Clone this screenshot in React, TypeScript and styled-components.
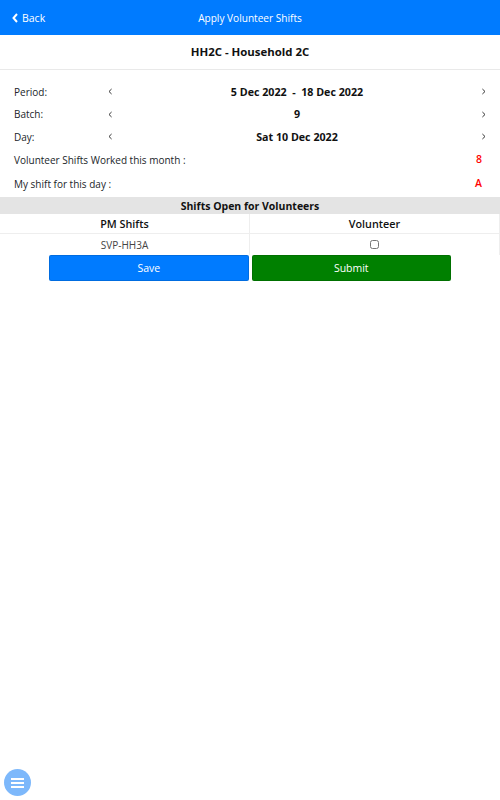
import React from 'react';
import styled, { createGlobalStyle } from 'styled-components';

const GlobalStyle = createGlobalStyle`
  html, body {
    margin: 0;
    padding: 0;
    background: #fff;
    font-family: "Open Sans", sans-serif;
    font-size: 10px;
    color: #212529;
  }
`;

const Page = styled.div`
  position: relative;
  width: 500px;
  height: 800px;
  overflow: hidden;
`;

const Header = styled.header`
  height: 35px;
  background: #007bff;
  color: #fff;
  position: relative;
  display: flex;
  align-items: center;
  justify-content: center;
`;

const BackLink = styled.a`
  position: absolute;
  left: 12px;
  top: 0;
  height: 35px;
  display: flex;
  align-items: center;
  gap: 4px;
  font-size: 10.5px;
`;

const HeaderTitle = styled.div`
  font-size: 10.1px;
`;

const SubHeader = styled.div`
  height: 33px;
  padding-bottom: 1px;
  border-bottom: 1px solid #e9e9e9;
  display: flex;
  align-items: center;
  justify-content: center;
  font-weight: 700;
  font-size: 11.4px;
  color: #111;
`;

const Filters = styled.div`
  padding: 10.5px 0 0.5px;
`;

const PickerRow = styled.div`
  height: 22.5px;
  display: grid;
  grid-template-columns: 94px 5px 1fr 5px;
  align-items: center;
  padding: 0 14px;
`;

const RowLabel = styled.span`
  font-size: 10px;
`;

const Chevron = styled.svg`
  width: 5px;
  height: 7px;
  fill: none;
  stroke: #333;
  stroke-width: 1;
`;

const PickerValue = styled.span`
  text-align: center;
  font-weight: 700;
  font-size: 10.7px;
  color: #111;
  white-space: pre;
`;

const InfoRow = styled.div`
  height: 24.25px;
  display: flex;
  align-items: center;
  justify-content: space-between;
  padding: 0 18px 0 14px;
`;

const InfoValue = styled.span`
  color: #f00;
  font-weight: 600;
  font-size: 10.5px;
  padding-bottom: 2px;
`;

const SectionTitle = styled.div`
  height: 17px;
  background: #e4e4e4;
  display: flex;
  align-items: center;
  justify-content: center;
  font-weight: 700;
  font-size: 10.5px;
  color: #111;
`;

const ShiftTable = styled.div`
  display: grid;
  grid-template-columns: 250px 250px;
`;

const HeadCell = styled.div`
  height: 20px;
  display: flex;
  align-items: center;
  justify-content: center;
  font-weight: 600;
  font-size: 10.8px;
  color: #111;
  border-bottom: 1px solid #eee;
  box-sizing: border-box;
  border-right: 1px solid #eee;
`;

const BodyCell = styled.div`
  height: 21px;
  display: flex;
  align-items: center;
  justify-content: center;
  font-size: 10px;
  color: #444;
  box-sizing: border-box;
  border-right: 1px solid #eee;
`;

const CheckBox = styled.input`
  width: 9px;
  height: 9px;
  margin: 0;
`;

const Actions = styled.div`
  display: flex;
  justify-content: flex-start;
  padding-left: 49px;
  gap: 3px;
`;

const ActionButton = styled.button<{ $bg: string }>`
  width: 199.5px;
  height: 26px;
  border: 1px solid rgba(0, 0, 0, 0.12);
  border-radius: 2px;
  background: ${p => p.$bg};
  color: #fff;
  font-family: "Open Sans", sans-serif;
  font-size: 10.5px;
  padding: 0;
`;

const MenuFab = styled.div`
  position: absolute;
  left: 4px;
  top: 769px;
  width: 27px;
  height: 27px;
  border-radius: 50%;
  background: #7db8fb;
  display: flex;
  flex-direction: column;
  align-items: center;
  justify-content: center;
  gap: 2px;
`;

const MenuBar = styled.span`
  width: 13px;
  height: 2px;
  background: #fff;
`;

const Left = () => (
  <Chevron viewBox="0 0 5 7"><path d="M3.6 1 L1 3.5 L3.6 6" /></Chevron>
);
const Right = () => (
  <Chevron viewBox="0 0 5 7"><path d="M1.4 1 L4 3.5 L1.4 6" /></Chevron>
);

const pickers = [
  { label: 'Period:', value: '5 Dec 2022  -  18 Dec 2022' },
  { label: 'Batch:', value: '9' },
  { label: 'Day:', value: 'Sat 10 Dec 2022' },
];

export default function App() {
  return (
    <Page>
      <GlobalStyle />
      <Header>
        <BackLink>
          <svg width="6" height="10" viewBox="0 0 6 10" fill="none" stroke="#fff" strokeWidth="2">
            <path d="M5 1 L1.5 5 L5 9" />
          </svg>
          Back
        </BackLink>
        <HeaderTitle>Apply Volunteer Shifts</HeaderTitle>
      </Header>
      <SubHeader>HH2C - Household 2C</SubHeader>
      <Filters>
        {pickers.map(p => (
          <PickerRow key={p.label}>
            <RowLabel>{p.label}</RowLabel>
            <Left />
            <PickerValue>{p.value}</PickerValue>
            <Right />
          </PickerRow>
        ))}
        <InfoRow>
          <RowLabel>Volunteer Shifts Worked this month :</RowLabel>
          <InfoValue>8</InfoValue>
        </InfoRow>
        <InfoRow>
          <RowLabel>My shift for this day :</RowLabel>
          <InfoValue>A</InfoValue>
        </InfoRow>
      </Filters>
      <SectionTitle>Shifts Open for Volunteers</SectionTitle>
      <ShiftTable>
        <HeadCell>PM Shifts</HeadCell>
        <HeadCell>Volunteer</HeadCell>
        <BodyCell>SVP-HH3A</BodyCell>
        <BodyCell><CheckBox type="checkbox" /></BodyCell>
      </ShiftTable>
      <Actions>
        <ActionButton $bg="#007bff">Save</ActionButton>
        <ActionButton $bg="#008000">Submit</ActionButton>
      </Actions>
      <MenuFab>
        <MenuBar />
        <MenuBar />
        <MenuBar />
      </MenuFab>
    </Page>
  );
}
